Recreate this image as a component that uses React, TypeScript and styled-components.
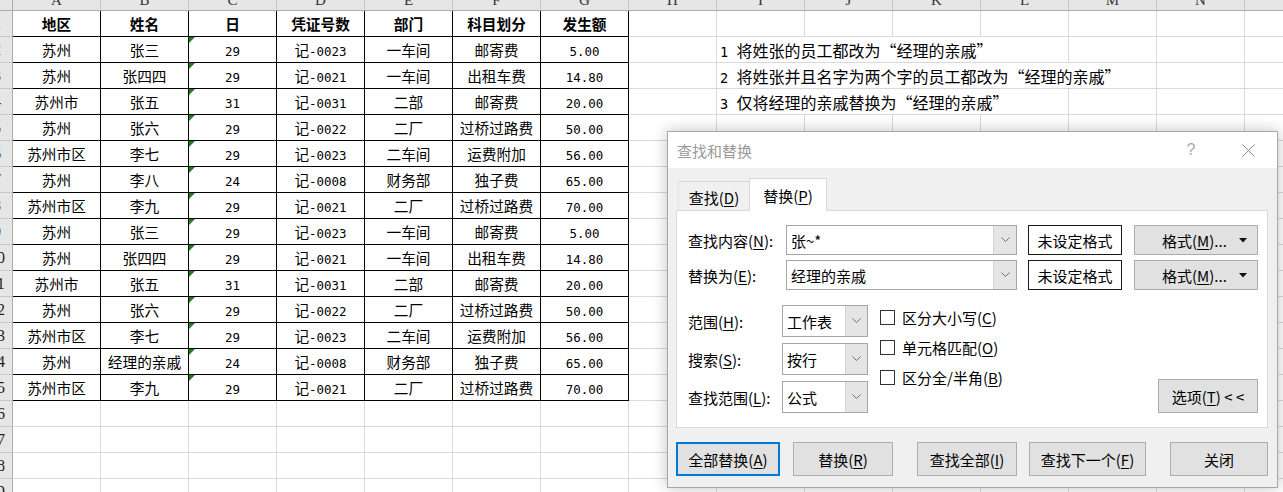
import React from "react";
import styled, { createGlobalStyle } from "styled-components";

const GlobalStyle = createGlobalStyle`
  html, body { margin: 0; padding: 0; background: #fff; }
  body { font-family: "Noto Sans CJK SC", sans-serif; overflow: hidden; }
`;

const CJK = `"Noto Sans CJK SC", "Noto Sans", sans-serif`;

const Page = styled.div`
  position: relative;
  width: 1283px;
  height: 492px;
  overflow: hidden;
  background: #fff;
`;

const Sheet = styled.div`
  display: grid;
  grid-template-columns: 13px repeat(15, 88px);
  grid-template-rows: 23px repeat(19, 26px);
  margin-top: -12px;
  font-family: ${CJK};
  font-size: 14.67px;
  color: #000;
`;

const Corner = styled.div`
  background: #e6e6e6;
  border-right: 1px solid #ababab;
  border-bottom: 1px solid #ababab;
`;

const ColHead = styled.div`
  background: #e6e6e6;
  border-right: 1px solid #c6c6c6;
  border-bottom: 1px solid #ababab;
  display: flex;
  align-items: center;
  justify-content: center;
  font-family: "Liberation Serif", serif;
  font-size: 15px;
  color: #333;
  padding-top: 2px;
  box-sizing: border-box;
`;

const RowHead = styled.div`
  background: #e6e6e6;
  border-right: 1px solid #ababab;
  border-bottom: 1px solid #c6c6c6;
  overflow: hidden;
  display: flex;
  align-items: center;
`;

const RowNum = styled.span`
  flex: 0 0 28px;
  margin-left: -17px;
  text-align: center;
  font-family: "Liberation Serif", serif;
  font-size: 16px;
  color: #222;
`;

const Cell = styled.div<{ $edge?: boolean; $bold?: boolean }>`
  position: relative;
  border-right: 1px solid ${(p) => (p.$edge ? "#000" : "#d9d9d9")};
  border-bottom: 1px solid ${(p) => (p.$edge ? "#000" : "#d9d9d9")};
  display: flex;
  align-items: center;
  justify-content: center;
  white-space: nowrap;
  font-weight: ${(p) => (p.$bold ? 700 : 400)};
`;

const NoteCell = styled.div<{ $span: number }>`
  grid-column: span ${(p) => p.$span};
  border-right: 1px solid #d9d9d9;
  border-bottom: 1px solid #d9d9d9;
  display: flex;
  align-items: center;
  padding-left: 3px;
  white-space: pre;
  font-size: 16px;
`;

const TextRun = styled.span`
  white-space: pre;
`;

/* half-width latin run, like SimSun's ASCII glyphs */
const Ascii = styled.span`
  font-family: "DejaVu Sans Mono", monospace;
  font-size: 0.85em;
`;

/* full-width curly quotes */
const Quote = styled.span`
  font-feature-settings: "fwid" 1;
`;

const Flag = styled.span`
  position: absolute;
  left: 0;
  top: 0;
  width: 0;
  height: 0;
  border-top: 6px solid #1e7e1e;
  border-right: 6px solid transparent;
`;

function Txt({ children }: { children: string }) {
  const parts = children.split(/([\x20-\x7e]+|[“”])/).filter((s) => s !== "");
  return (
    <TextRun>
      {parts.map((p, i) =>
        /^[\x20-\x7e]+$/.test(p) ? (
          <Ascii key={i}>{p}</Ascii>
        ) : p === "“" || p === "”" ? (
          <Quote key={i}>{p}</Quote>
        ) : (
          <React.Fragment key={i}>{p}</React.Fragment>
        )
      )}
    </TextRun>
  );
}

/* ---------- dialog ---------- */

const Dialog = styled.div`
  position: absolute;
  left: 667px;
  top: 131px;
  width: 611px;
  height: 357px;
  box-sizing: border-box;
  border: 1px solid #a8a8a8;
  background: #f0f0f0;
  box-shadow: 0 0 14px rgba(0, 0, 0, 0.25);
  display: flex;
  flex-direction: column;
  font-family: ${CJK};
  font-size: 15px;
  color: #000;
`;

const TitleBar = styled.div`
  height: 36px;
  background: #fff;
  display: flex;
  align-items: center;
  padding-left: 9px;
`;

const Title = styled.div`
  color: #9a9a9a;
  flex: 1;
`;

const TitleButton = styled.div<{ $w: number }>`
  width: ${(p) => p.$w}px;
  height: 36px;
  display: flex;
  align-items: center;
  justify-content: center;
  color: #a8a8a8;
  font-family: "Liberation Sans", sans-serif;
  font-size: 16px;
`;

const Body = styled.div`
  flex: 1;
  display: flex;
  flex-direction: column;
  padding: 0 9px 0 8px;
`;

const TabStrip = styled.div`
  height: 42px;
  display: flex;
  align-items: flex-end;
`;

const Tab = styled.div<{ $active?: boolean }>`
  position: relative;
  z-index: 1;
  box-sizing: border-box;
  display: flex;
  align-items: center;
  justify-content: center;
  ${(p) =>
    p.$active
      ? `
    width: 78px;
    height: 33px;
    margin-bottom: -1px;
    background: #fff;
    border: 1px solid #d9d9d9;
    border-bottom: none;
    padding-top: 1px;
  `
      : `
    width: 71px;
    height: 29px;
    margin-left: 2px;
    border-top: 1px solid #d9d9d9;
    border-left: 1px solid #e3e3e3;
    padding-top: 2px;
  `}
`;

const Panel = styled.div`
  height: 218px;
  box-sizing: border-box;
  background: #fff;
  border: 1px solid #d9d9d9;
  padding: 14px 9px 0 11px;
  display: flex;
  flex-direction: column;
`;

const FieldRow = styled.div`
  display: flex;
  align-items: center;
  height: 30px;
  & + & {
    margin-top: 5px;
  }
`;

const Label = styled.div<{ $w: number }>`
  width: ${(p) => p.$w}px;
  flex: 0 0 auto;
  white-space: nowrap;
`;

const Combo = styled.div<{ $w: number; $h: number }>`
  width: ${(p) => p.$w}px;
  height: ${(p) => p.$h}px;
  box-sizing: border-box;
  border: 1px solid #a6a6a6;
  background: #fff;
  display: flex;
  flex: 0 0 auto;
`;

const ComboValue = styled.div`
  flex: 1;
  display: flex;
  align-items: center;
  padding-left: 4px;
  white-space: nowrap;
`;

const DropButton = styled.div<{ $w: number }>`
  width: ${(p) => p.$w}px;
  background: #e5e5e5;
  border-left: 1px solid #d4d4d4;
  display: flex;
  align-items: center;
  justify-content: center;
`;

const FormatStatus = styled.div`
  width: 94px;
  height: 30px;
  box-sizing: border-box;
  margin-left: 11px;
  border: 1px solid #1a1a1a;
  background: #fff;
  display: flex;
  align-items: center;
  justify-content: center;
  white-space: nowrap;
`;

const Button = styled.div<{ $w: number; $h?: number; $ml?: number; $primary?: boolean }>`
  width: ${(p) => p.$w}px;
  height: ${(p) => p.$h ?? 34}px;
  margin-left: ${(p) => p.$ml ?? 0}px;
  flex: 0 0 auto;
  box-sizing: border-box;
  background: #e1e1e1;
  border: ${(p) => (p.$primary ? "2px solid #0078d7" : "1px solid #adadad")};
  display: flex;
  align-items: center;
  justify-content: center;
  white-space: nowrap;
`;

const FormatButton = styled(Button)`
  justify-content: flex-start;
  padding: 0 10px 0 27px;
`;

const Arrow = styled.span`
  margin-left: auto;
  display: flex;
`;

const Lower = styled.div`
  display: flex;
  align-items: flex-start;
  margin-top: 15px;
  flex: 1;
  padding-bottom: 14px;
`;

const OptGrid = styled.div`
  display: grid;
  grid-template-columns: 94px 86px;
  grid-auto-rows: 32px;
  row-gap: 6px;
  align-items: center;
`;

const CheckCol = styled.div`
  margin-left: 12px;
  padding-top: 5px;
  display: flex;
  flex-direction: column;
  gap: 15px;
`;

const CheckItem = styled.div`
  display: flex;
  align-items: center;
  height: 15px;
  gap: 7px;
  white-space: nowrap;
`;

const Box = styled.span`
  width: 15px;
  height: 15px;
  box-sizing: border-box;
  border: 1px solid #333;
  background: #fff;
`;

const OptionsButton = styled(Button)`
  margin-left: auto;
  align-self: flex-end;
`;

const ButtonRow = styled.div`
  display: flex;
  margin-top: 14px;
`;

const Chevron = () => (
  <svg width="9" height="6" viewBox="0 0 9 6">
    <polyline points="0.5,0.5 4.5,4.5 8.5,0.5" fill="none" stroke="#6e6e6e" strokeWidth="1" />
  </svg>
);

const DownTri = () => (
  <svg width="8" height="5" viewBox="0 0 8 5">
    <polygon points="0,0 8,0 4,4.5" fill="#111" />
  </svg>
);

const CloseX = () => (
  <svg width="13" height="13" viewBox="0 0 13 13">
    <path d="M0.5 0.5 L12.5 12.5 M12.5 0.5 L0.5 12.5" stroke="#8a8a8a" strokeWidth="1" fill="none" />
  </svg>
);

const letters = "ABCDEFGHIJKLMNO".split("");
const header = ["地区", "姓名", "日", "凭证号数", "部门", "科目划分", "发生额"];
const rows: string[][] = [
  ["苏州", "张三", "29", "记-0023", "一车间", "邮寄费", "5.00"],
  ["苏州", "张四四", "29", "记-0021", "一车间", "出租车费", "14.80"],
  ["苏州市", "张五", "31", "记-0031", "二部", "邮寄费", "20.00"],
  ["苏州", "张六", "29", "记-0022", "二厂", "过桥过路费", "50.00"],
  ["苏州市区", "李七", "29", "记-0023", "二车间", "运费附加", "56.00"],
  ["苏州", "李八", "24", "记-0008", "财务部", "独子费", "65.00"],
  ["苏州市区", "李九", "29", "记-0021", "二厂", "过桥过路费", "70.00"],
  ["苏州", "张三", "29", "记-0023", "一车间", "邮寄费", "5.00"],
  ["苏州", "张四四", "29", "记-0021", "一车间", "出租车费", "14.80"],
  ["苏州市", "张五", "31", "记-0031", "二部", "邮寄费", "20.00"],
  ["苏州", "张六", "29", "记-0022", "二厂", "过桥过路费", "50.00"],
  ["苏州市区", "李七", "29", "记-0023", "二车间", "运费附加", "56.00"],
  ["苏州", "经理的亲戚", "24", "记-0008", "财务部", "独子费", "65.00"],
  ["苏州市区", "李九", "29", "记-0021", "二厂", "过桥过路费", "70.00"],
];
const notes: Record<number, { text: string; span: number }> = {
  2: { text: "1 将姓张的员工都改为“经理的亲戚”", span: 4 },
  3: { text: "2 将姓张并且名字为两个字的员工都改为“经理的亲戚”", span: 5 },
  4: { text: "3 仅将经理的亲戚替换为“经理的亲戚”", span: 4 },
};

function SheetRow({ r }: { r: number }) {
  const cells: React.ReactNode[] = [];
  const data = r === 1 ? header : r <= 15 ? rows[r - 2] : null;
  for (let c = 0; c < 7; c++) {
    cells.push(
      <Cell key={c} $edge={!!data} $bold={r === 1}>
        {data && c === 2 && r > 1 && <Flag />}
        {data ? <Txt>{data[c]}</Txt> : null}
      </Cell>
    );
  }
  cells.push(<Cell key="h" />);
  const note = notes[r];
  let c = 8;
  if (note) {
    cells.push(
      <NoteCell key="note" $span={note.span}>
        <Txt>{note.text}</Txt>
      </NoteCell>
    );
    c += note.span;
  }
  for (; c < 15; c++) cells.push(<Cell key={c} />);
  return (
    <>
      <RowHead>
        <RowNum>{r}</RowNum>
      </RowHead>
      {cells}
    </>
  );
}

const U = styled.span`
  text-decoration: underline;
  text-underline-offset: 2px;
`;

const acc = (pre: string, key: string, post = ")") => (
  <span>
    {pre}(<U>{key}</U>
    {post}
  </span>
);

export default function App() {
  return (
    <Page>
      <GlobalStyle />
      <Sheet>
        <Corner />
        {letters.map((l) => (
          <ColHead key={l}>{l}</ColHead>
        ))}
        {Array.from({ length: 19 }, (_, i) => (
          <SheetRow key={i} r={i + 1} />
        ))}
      </Sheet>

      <Dialog>
        <TitleBar>
          <Title>查找和替换</Title>
          <TitleButton $w={30}>?</TitleButton>
          <TitleButton $w={19} />
          <TitleButton $w={46}>
            <CloseX />
          </TitleButton>
          <TitleButton $w={6} />
        </TitleBar>
        <Body>
          <TabStrip>
            <Tab>{acc("查找", "D")}</Tab>
            <Tab $active>{acc("替换", "P")}</Tab>
          </TabStrip>
          <Panel>
            <FieldRow>
              <Label $w={98}>{acc("查找内容", "N", "):")}</Label>
              <Combo $w={231} $h={30}>
                <ComboValue>张~*</ComboValue>
                <DropButton $w={22}>
                  <Chevron />
                </DropButton>
              </Combo>
              <FormatStatus>未设定格式</FormatStatus>
              <FormatButton $w={124} $h={30} $ml={12}>
                <span>
                  格式(<U>M</U>)...
                </span>
                <Arrow>
                  <DownTri />
                </Arrow>
              </FormatButton>
            </FieldRow>
            <FieldRow>
              <Label $w={98}>{acc("替换为", "E", "):")}</Label>
              <Combo $w={231} $h={30}>
                <ComboValue>经理的亲戚</ComboValue>
                <DropButton $w={22}>
                  <Chevron />
                </DropButton>
              </Combo>
              <FormatStatus>未设定格式</FormatStatus>
              <FormatButton $w={124} $h={30} $ml={12}>
                <span>
                  格式(<U>M</U>)...
                </span>
                <Arrow>
                  <DownTri />
                </Arrow>
              </FormatButton>
            </FieldRow>
            <Lower>
              <OptGrid>
                <Label $w={94}>{acc("范围", "H", "):")}</Label>
                <Combo $w={86} $h={32}>
                  <ComboValue>工作表</ComboValue>
                  <DropButton $w={21}>
                    <Chevron />
                  </DropButton>
                </Combo>
                <Label $w={94}>{acc("搜索", "S", "):")}</Label>
                <Combo $w={86} $h={32}>
                  <ComboValue>按行</ComboValue>
                  <DropButton $w={21}>
                    <Chevron />
                  </DropButton>
                </Combo>
                <Label $w={94}>{acc("查找范围", "L", "):")}</Label>
                <Combo $w={86} $h={32}>
                  <ComboValue>公式</ComboValue>
                  <DropButton $w={21}>
                    <Chevron />
                  </DropButton>
                </Combo>
              </OptGrid>
              <CheckCol>
                <CheckItem>
                  <Box />
                  {acc("区分大小写", "C")}
                </CheckItem>
                <CheckItem>
                  <Box />
                  {acc("单元格匹配", "O")}
                </CheckItem>
                <CheckItem>
                  <Box />
                  {acc("区分全/半角", "B")}
                </CheckItem>
              </CheckCol>
              <OptionsButton $w={100} $h={34}>
                <span>
                  选项(<U>T</U>) &lt; &lt;
                </span>
              </OptionsButton>
            </Lower>
          </Panel>
          <ButtonRow>
            <Button $w={104} $primary>
              {acc("全部替换", "A")}
            </Button>
            <Button $w={100} $ml={13}>
              {acc("替换", "R")}
            </Button>
            <Button $w={100} $ml={24}>
              {acc("查找全部", "I")}
            </Button>
            <Button $w={117} $ml={12}>
              {acc("查找下一个", "F")}
            </Button>
            <Button $w={98} $ml={24}>
              关闭
            </Button>
          </ButtonRow>
        </Body>
      </Dialog>
    </Page>
  );
}
